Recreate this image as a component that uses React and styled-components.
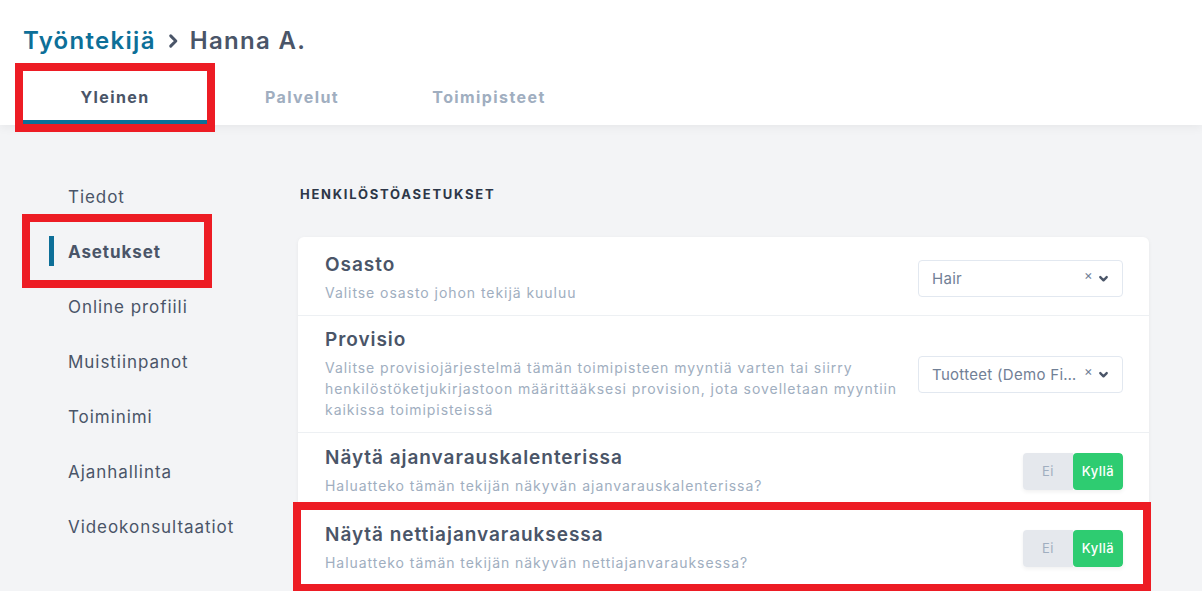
import styled, { createGlobalStyle } from "styled-components";

const GlobalStyle = createGlobalStyle`
  * { box-sizing: border-box; }
  body {
    margin: 0;
    background: #f3f4f6;
    font-family: "Inter", "Noto Sans", sans-serif;
    color: #4a5568;
  }
`;

const Page = styled.div`
  position: relative;
  width: 1202px;
  height: 591px;
  overflow: hidden;
  background: #f3f4f6;
`;

const Header = styled.header`
  height: 125px;
  background: #fff;
  padding: 26px 0 0 23px;
  box-shadow: 0 2px 10px rgba(0, 0, 0, 0.06);
  display: flex;
  flex-direction: column;
`;

const Breadcrumb = styled.h1`
  margin: 0;
  display: flex;
  align-items: center;
  gap: 10px;
  font-size: 24px;
  font-weight: 600;
  line-height: 30px;
  letter-spacing: 1.3px;
`;

const Crumb = styled.span`
  color: ${(p) => (p.$link ? "#0d6f98" : "#4a5568")};
`;

const Tabs = styled.nav`
  display: flex;
  gap: 3px;
  margin-top: 27px;
`;

const Tab = styled.div`
  width: 184px;
  height: 42px;
  display: flex;
  align-items: flex-start;
  justify-content: center;
  padding-top: 4px;
  font-size: 16px;
  font-weight: 700;
  letter-spacing: 1.4px;
  color: ${(p) => (p.$active ? "#4a5568" : "#a0aec0")};
  border-bottom: 5px solid ${(p) => (p.$active ? "#0d6f98" : "transparent")};
`;

const Body = styled.div`
  display: flex;
`;

const Sidebar = styled.aside`
  width: 298px;
  padding-top: 44px;
  display: flex;
  flex-direction: column;
`;

const SideItem = styled.div`
  position: relative;
  height: 55px;
  display: flex;
  align-items: center;
  padding-left: 68px;
  font-size: 17px;
  letter-spacing: ${(p) => (p.$active ? "0.9px" : "0.95px")};
  font-weight: ${(p) => (p.$active ? 700 : 400)};
  color: #4a5568;

  &::before {
    content: "";
    display: ${(p) => (p.$active ? "block" : "none")};
    position: absolute;
    left: 49px;
    top: 12px;
    width: 5px;
    height: 30px;
    background: #0d6f98;
  }
`;

const Main = styled.main`
  width: 851px;
  padding-top: 60px;
`;

const SectionTitle = styled.h2`
  margin: 0 0 34px 2px;
  font-size: 13px;
  font-weight: 700;
  letter-spacing: 1.75px;
  color: #2d3748;
  line-height: 18px;
`;

const Card = styled.section`
  background: #fff;
  border-radius: 6px;
  box-shadow: 0 1px 4px rgba(0, 0, 0, 0.05);
`;

const Row = styled.div`
  display: flex;
  align-items: center;
  gap: 20px;
  padding: ${(p) => p.$pad || "16px 26px 16px 27px"};
  &:not(:last-of-type) {
    border-bottom: 1px solid #edf0f3;
  }
`;

const Text = styled.div`
  flex: 1;
`;

const Label = styled.div`
  font-size: 19px;
  font-weight: 600;
  letter-spacing: 0.95px;
  color: #4a5568;
  line-height: 24px;
`;

const Help = styled.div`
  margin-top: 5px;
  font-size: 14px;
  letter-spacing: 0.95px;
  color: #a0aec0;
  line-height: 21px;
`;

const Select = styled.div`
  width: 205px;
  height: 37px;
  flex-shrink: 0;
  border: 1px solid #e2e8f0;
  border-radius: 4px;
  display: flex;
  align-items: center;
  padding: 0 13px 0 13px;
  gap: 5px;
  font-size: 15px;
  letter-spacing: 0.3px;
  color: #718096;
`;

const SelectValue = styled.span`
  flex: 1;
  white-space: nowrap;
  overflow: hidden;
  text-overflow: ellipsis;
`;

const Clear = styled.span`
  font-size: 13px;
  color: #718096;
  margin-top: -6px;
`;

const Toggle = styled.div`
  display: flex;
  flex-shrink: 0;
  height: 37px;
  border-radius: 4px;
  overflow: hidden;
  box-shadow: 0 2px 4px rgba(0, 0, 0, 0.06);
`;

const ToggleOption = styled.div`
  width: 50px;
  display: flex;
  align-items: center;
  justify-content: center;
  font-size: 13px;
  letter-spacing: 0.5px;
  font-weight: ${(p) => (p.$on ? 500 : 400)};
  background: ${(p) => (p.$on ? "#2ecc71" : "#e5e8ed")};
  color: ${(p) => (p.$on ? "#fff" : "#a0aec0")};
  border-radius: ${(p) => (p.$on ? "4px" : "0")};
`;

const Highlight = styled.div`
  position: absolute;
  left: ${(p) => p.$x}px;
  top: ${(p) => p.$y}px;
  width: ${(p) => p.$w}px;
  height: ${(p) => p.$h}px;
  border: 8px solid #ed1c24;
  pointer-events: none;
`;

const Chevron = ({ size = 11, stroke = 2.6, color = "#4a5568" }) => (
  <svg width={size} height={size} viewBox="0 0 12 12" fill="none">
    <path d="M2.5 4.5 6 8l3.5-3.5" stroke={color} strokeWidth={stroke} strokeLinecap="round" strokeLinejoin="round" />
  </svg>
);

const ChevronRight = () => (
  <svg width="14" height="16" viewBox="0 0 12 14" fill="none">
    <path d="M4 2.5 8.5 7 4 11.5" stroke="#4a5568" strokeWidth="2.6" strokeLinecap="round" strokeLinejoin="round" />
  </svg>
);

const menu = ["Tiedot", "Asetukset", "Online profiili", "Muistiinpanot", "Toiminimi", "Ajanhallinta", "Videokonsultaatiot"];

function SelectField({ value }) {
  return (
    <Select>
      <SelectValue>{value}</SelectValue>
      <Clear>×</Clear>
      <Chevron />
    </Select>
  );
}

function YesNo() {
  return (
    <Toggle>
      <ToggleOption>Ei</ToggleOption>
      <ToggleOption $on>Kyllä</ToggleOption>
    </Toggle>
  );
}

export default function App() {
  return (
    <Page>
      <GlobalStyle />
      <Header>
        <Breadcrumb>
          <Crumb $link>Työntekijä</Crumb>
          <ChevronRight />
          <Crumb>Hanna A.</Crumb>
        </Breadcrumb>
        <Tabs>
          <Tab $active>Yleinen</Tab>
          <Tab>Palvelut</Tab>
          <Tab>Toimipisteet</Tab>
        </Tabs>
      </Header>
      <Body>
        <Sidebar>
          {menu.map((m) => (
            <SideItem key={m} $active={m === "Asetukset"}>
              {m}
            </SideItem>
          ))}
        </Sidebar>
        <Main>
          <SectionTitle>HENKILÖSTÖASETUKSET</SectionTitle>
          <Card>
            <Row $pad="16px 26px 12px 27px">
              <Text>
                <Label>Osasto</Label>
                <Help>Valitse osasto johon tekijä kuuluu</Help>
              </Text>
              <SelectField value="Hair" />
            </Row>
            <Row $pad="12px 26px 12px 27px">
              <Text>
                <Label>Provisio</Label>
                <Help>
                  Valitse provisiojärjestelmä tämän toimipisteen myyntiä varten tai siirry
                  henkilöstöketjukirjastoon määrittääksesi provision, jota sovelletaan myyntiin
                  kaikissa toimipisteissä
                </Help>
              </Text>
              <SelectField value="Tuotteet (Demo Firma)" />
            </Row>
            <Row $pad="13px 26px 12px 27px">
              <Text>
                <Label>Näytä ajanvarauskalenterissa</Label>
                <Help>Haluatteko tämän tekijän näkyvän ajanvarauskalenterissa?</Help>
              </Text>
              <YesNo />
            </Row>
            <Row $pad="14px 26px 12px 27px">
              <Text>
                <Label>Näytä nettiajanvarauksessa</Label>
                <Help>Haluatteko tämän tekijän näkyvän nettiajanvarauksessa?</Help>
              </Text>
              <YesNo />
            </Row>
          </Card>
        </Main>
      </Body>
      <Highlight $x={15} $y={63} $w={200} $h={69} />
      <Highlight $x={22} $y={214} $w={190} $h={74} />
      <Highlight $x={293} $y={502} $w={858} $h={90} />
    </Page>
  );
}
